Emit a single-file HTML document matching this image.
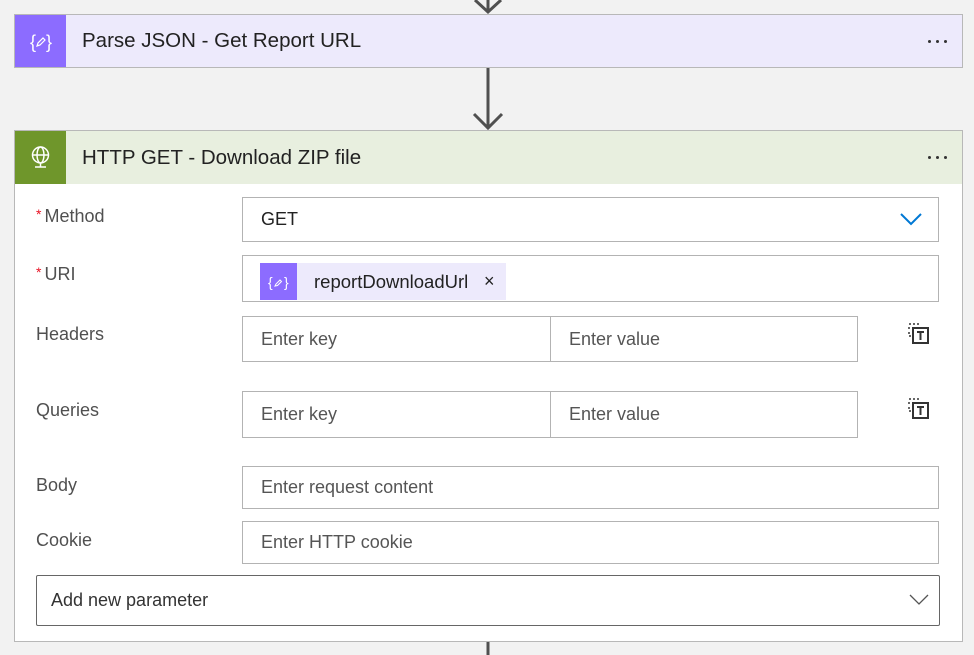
<!DOCTYPE html>
<html><head><style>
*{margin:0;padding:0;box-sizing:border-box}
body{width:974px;height:655px;background:#f2f2f2;position:relative;overflow:hidden;font-family:"Segoe UI","Liberation Sans",sans-serif;color:#333}
.a{position:absolute}
.box{position:absolute;border:1px solid #b3b3b3;background:#fff;font-size:18px;color:#555;padding-left:18px;display:flex;align-items:center}
.lbl{position:absolute;left:36px;font-size:18px;color:#505050}
.req{color:#e81123;font-size:14px;margin-right:3px;vertical-align:3px}
.dots{position:absolute;right:0;top:0;width:50px;height:52px;display:flex;align-items:center;justify-content:center;gap:5px}
.dots i{width:3px;height:3px;background:#333;border-radius:50%}
</style></head><body>
<svg class="a" style="left:0;top:0" width="974" height="655">
<g stroke="#505050" stroke-width="3" fill="none">
<line x1="488" y1="0" x2="488" y2="12"/><polyline points="475,0 488,12 501,0"/>
<line x1="488" y1="67" x2="488" y2="128"/><polyline points="474,114 488,128 502,114"/>
<line x1="488" y1="642" x2="488" y2="655"/>
</g></svg>

<!-- Card 1 -->
<div class="a" style="left:14px;top:14px;width:949px;height:54px;border:1px solid #b8b8b8;background:#edeafc">
 <div class="a" style="left:0;top:0;width:51px;height:52px;background:#8c6cff">
  <svg width="51" height="52"><text x="15" y="33" fill="#fff" font-size="18" font-family="Liberation Sans">{</text><text x="31" y="33" fill="#fff" font-size="18" font-family="Liberation Sans">}</text><path d="M22 31l1-3 5-5 2 2-5 5z" stroke="#fff" stroke-width="1.2" fill="none"/></svg>
 </div>
 <div class="a" style="left:67px;top:14px;font-size:20.5px;color:#222">Parse JSON - Get Report URL</div>
 <div class="dots"><i></i><i></i><i></i></div>
</div>

<!-- Card 2 -->
<div class="a" style="left:14px;top:130px;width:949px;height:512px;border:1px solid #b8b8b8;background:#fff">
 <div class="a" style="left:0;top:0;width:947px;height:53px;background:#e8efdf">
  <div class="a" style="left:0;top:0;width:51px;height:53px;background:#6f962b">
   <svg width="51" height="53" fill="none" stroke="#fff" stroke-width="1.5"><circle cx="25.5" cy="24" r="8"/><ellipse cx="25.5" cy="24" rx="3.5" ry="8"/><line x1="17.5" y1="24" x2="33.5" y2="24"/><line x1="25.5" y1="32" x2="25.5" y2="36"/><line x1="20" y1="36" x2="31" y2="36"/></svg>
  </div>
  <div class="a" style="left:67px;top:15px;font-size:20.5px;color:#222">HTTP GET - Download ZIP file</div>
  <div class="dots"><i></i><i></i><i></i></div>
 </div>
</div>

<div class="lbl" style="top:206px"><span class="req">*</span>Method</div>
<div class="box" style="left:242px;top:197px;width:697px;height:45px;color:#222">GET
 <svg class="a" style="right:15px;top:14px" width="24" height="14"><polyline points="2,2 12,12 22,2" stroke="#0078d4" stroke-width="2" fill="none"/></svg></div>

<div class="lbl" style="top:264px"><span class="req">*</span>URI</div>
<div class="box" style="left:242px;top:255px;width:697px;height:47px"></div>
<div class="a" style="left:260px;top:263px;width:246px;height:37px;background:#edeafc">
 <div class="a" style="left:0;top:0;width:37px;height:37px;background:#8c6cff">
  <svg width="37" height="37"><text x="8" y="24" fill="#fff" font-size="14" font-family="Liberation Sans">{</text><text x="24" y="24" fill="#fff" font-size="14" font-family="Liberation Sans">}</text><path d="M15 23l1-2 4-4 1.5 1.5-4 4z" stroke="#fff" stroke-width="1" fill="none"/></svg>
 </div>
 <div class="a" style="left:54px;top:8px;font-size:18.5px;color:#222;white-space:nowrap">reportDownloadUrl</div>
 <div class="a" style="left:224px;top:8px;font-size:18px;color:#222">×</div>
</div>

<div class="lbl" style="top:324px">Headers</div>
<div class="box" style="left:242px;top:316px;width:309px;height:46px">Enter key</div>
<div class="box" style="left:550px;top:316px;width:308px;height:46px">Enter value</div>
<svg class="a" style="left:907px;top:322px" width="24" height="24" fill="none" stroke="#333"><path d="M2 2h2M6 2h2M10 2h2M2 5v2M2 10v2M2 14h2" stroke-width="1.5"/><rect x="6" y="6" width="15" height="15" stroke-width="2"/><path d="M10 10h7M13.5 10v8" stroke-width="2"/></svg>

<div class="lbl" style="top:400px">Queries</div>
<div class="box" style="left:242px;top:391px;width:309px;height:47px">Enter key</div>
<div class="box" style="left:550px;top:391px;width:308px;height:47px">Enter value</div>
<svg class="a" style="left:907px;top:397px" width="24" height="24" fill="none" stroke="#333"><path d="M2 2h2M6 2h2M10 2h2M2 5v2M2 10v2M2 14h2" stroke-width="1.5"/><rect x="6" y="6" width="15" height="15" stroke-width="2"/><path d="M10 10h7M13.5 10v8" stroke-width="2"/></svg>

<div class="lbl" style="top:475px">Body</div>
<div class="box" style="left:242px;top:466px;width:697px;height:43px">Enter request content</div>

<div class="lbl" style="top:530px">Cookie</div>
<div class="box" style="left:242px;top:521px;width:697px;height:43px">Enter HTTP cookie</div>

<div class="box" style="left:36px;top:575px;width:904px;height:51px;border-color:#666;border-radius:2px;padding-left:14px;color:#333">Add new parameter
 <svg class="a" style="right:10px;top:18px" width="20" height="12"><polyline points="1,1 10,10 19,1" stroke="#555" stroke-width="1.3" fill="none"/></svg></div>
</body></html>
